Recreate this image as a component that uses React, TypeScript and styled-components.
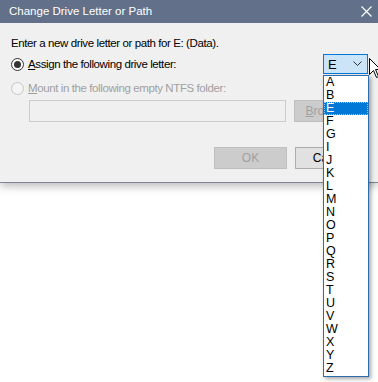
import React from "react";
import styled, { createGlobalStyle } from "styled-components";

const Global = createGlobalStyle`
  html, body { margin: 0; padding: 0; background: #ffffff; overflow: hidden; }
  * { box-sizing: border-box; }
`;

const FONT = `"Liberation Sans", Arial, sans-serif`;

const Page = styled.div`
  position: relative;
  width: 378px;
  height: 382px;
  font-family: ${FONT};
  font-size: 11.5px;
  letter-spacing: -0.4px;
  color: #000;
`;

const Window = styled.div`
  width: 378px;
  border-bottom: 1px solid #7b8796;
  box-shadow: 0 3px 9px rgba(0, 0, 0, 0.28);
`;

const TitleBar = styled.div`
  height: 23px;
  background: #627189;
  color: #ffffff;
  display: flex;
  align-items: center;
  justify-content: space-between;
  padding: 0 6px 1px 9px;
  font-size: 11.5px;
  letter-spacing: 0;
`;

const Body = styled.div`
  background: #f0f0f0;
  height: 159px;
  padding: 13px 10px 0 11px;
  display: flex;
  flex-direction: column;
`;

const Prompt = styled.div`
  line-height: 14px;
  height: 14px;
`;

const RadioRow = styled.div`
  display: flex;
  align-items: center;
  justify-content: space-between;
  margin-top: 4px;
  height: 20px;
`;

const RadioLabel = styled.label<{ $disabled?: boolean }>`
  display: flex;
  align-items: center;
  gap: 4px;
  color: ${(p) => (p.$disabled ? "#a0a0a0" : "#000")};
  line-height: 14px;
`;

const Circle = styled.span<{ $disabled?: boolean }>`
  width: 13px;
  height: 13px;
  border-radius: 50%;
  border: 1px solid ${(p) => (p.$disabled ? "#c6c6c6" : "#333333")};
  background: ${(p) => (p.$disabled ? "#f4f4f4" : "#ffffff")};
  display: flex;
  align-items: center;
  justify-content: center;
  flex: none;
`;

const Dot = styled.span`
  width: 7px;
  height: 7px;
  border-radius: 50%;
  background: #333333;
`;

const U = styled.span`
  text-decoration: underline;
  text-underline-offset: 1px;
`;

const Combo = styled.div`
  width: 45px;
  height: 20px;
  border: 1px solid #0078d7;
  background: #cce4f7;
  display: flex;
  align-items: center;
  justify-content: space-between;
  padding: 0 5px 0 4px;
  font-size: 13px;
  letter-spacing: 0;
`;

const FolderRow = styled.div`
  display: flex;
  gap: 8px;
  margin-top: 2px;
  padding-left: 18px;
`;

const TextBox = styled.div`
  width: 257px;
  height: 22px;
  border: 1px solid #cccccc;
  background: #f0f0f0;
`;

const Button = styled.div<{ $disabled?: boolean }>`
  width: 73px;
  height: 22px;
  border: 1px solid ${(p) => (p.$disabled ? "#bfbfbf" : "#adadad")};
  background: ${(p) => (p.$disabled ? "#cccccc" : "#e1e1e1")};
  color: ${(p) => (p.$disabled ? "#a0a0a0" : "#000")};
  display: flex;
  align-items: center;
  justify-content: center;
  line-height: 14px;
  font-size: 12px;
  letter-spacing: 0;
`;

const ButtonRow = styled.div`
  display: flex;
  gap: 8px;
  justify-content: flex-end;
  margin-top: 25px;
`;

const ListBox = styled.div`
  position: absolute;
  left: 323px;
  top: 75px;
  width: 46px;
  border: 1px solid #2f6cac;
  background: #ffffff;
  box-shadow: 2px 2px 4px rgba(0, 0, 0, 0.35);
  padding: 0 0 1px 0;
`;

const Item = styled.div<{ $sel?: boolean }>`
  height: 13px;
  line-height: 13px;
  padding-left: 2px;
  font-size: 12.5px;
  letter-spacing: 0;
  background: ${(p) => (p.$sel ? "#0078d7" : "transparent")};
  color: ${(p) => (p.$sel ? "#ffffff" : "#000000")};
  outline: ${(p) => (p.$sel ? "1px dotted #99c9ef" : "none")};
  outline-offset: -1px;
`;

const Cursor = styled.svg`
  position: absolute;
  left: 369px;
  top: 58px;
`;

const letters = ["A","B","E","F","G","I","J","K","L","M","N","O","P","Q","R","S","T","U","V","W","X","Y","Z"];

export default function App() {
  return (
    <Page>
      <Global />
      <Window>
        <TitleBar>
          <span>Change Drive Letter or Path</span>
          <svg width="11" height="11" viewBox="0 0 11 11">
            <path d="M0.5 0.5 L10.5 10.5 M10.5 0.5 L0.5 10.5" stroke="#ffffff" strokeWidth="1.2" />
          </svg>
        </TitleBar>
        <Body>
          <Prompt>Enter a new drive letter or path for E: (Data).</Prompt>
          <RadioRow>
            <RadioLabel>
              <Circle><Dot /></Circle>
              <span><U>A</U>ssign the following drive letter:</span>
            </RadioLabel>
            <Combo>
              <span>E</span>
              <svg width="9" height="6" viewBox="0 0 9 6">
                <path d="M0.5 0.5 L4.5 4.5 L8.5 0.5" stroke="#333" fill="none" strokeWidth="1" />
              </svg>
            </Combo>
          </RadioRow>
          <RadioRow>
            <RadioLabel $disabled>
              <Circle $disabled />
              <span><U>M</U>ount in the following empty NTFS folder:</span>
            </RadioLabel>
          </RadioRow>
          <FolderRow>
            <TextBox />
            <Button $disabled><span><U>B</U>rowse...</span></Button>
          </FolderRow>
          <ButtonRow>
            <Button $disabled>OK</Button>
            <Button>Cancel</Button>
          </ButtonRow>
        </Body>
      </Window>
      <ListBox>
        {letters.map((l) => (
          <Item key={l} $sel={l === "E"}>{l}</Item>
        ))}
      </ListBox>
      <Cursor width="12" height="21" viewBox="0 0 12 21">
        <path d="M0.5 0.5 L0.5 16.5 L4.5 12.5 L7.5 19.5 L9.5 18.5 L6.5 11.5 L11.5 11.5 Z" fill="#ffffff" stroke="#000000" strokeWidth="1" />
      </Cursor>
    </Page>
  );
}
